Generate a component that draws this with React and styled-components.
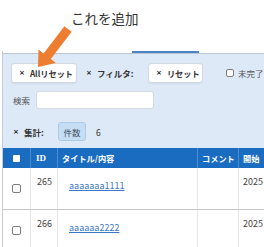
import React from "react";
import styled, { createGlobalStyle } from "styled-components";

const Global = createGlobalStyle`
  html, body { margin: 0; padding: 0; background: #fff; }
  body { font-family: "Noto Sans CJK JP", "Noto Sans", sans-serif; color: #333; }
  * { box-sizing: border-box; }
`;

const Page = styled.div`
  position: relative;
  width: 264px;
  height: 247px;
  overflow: hidden;
`;

const Heading = styled.div`
  height: 51px;
  padding: 9px 0 0 71px;
  font-size: 13.5px;
  line-height: 18px;
  color: #333;
`;

const Frame = styled.div`
  margin-left: 2px;
  border-left: 1px solid #c8ccd0;
`;

const TabBar = styled.div`
  display: flex;
  height: 2px;
  padding-left: 129px;
`;

const Tab = styled.div`
  width: 67px;
  height: 2px;
  background: #4a84c2;
`;

const Panel = styled.div`
  display: flex;
  flex-direction: column;
  background: #dde9f6;
  border-top: 1px solid #b7c6d6;
  padding: 9px 0 7px 8px;
`;

const Row = styled.div`
  display: flex;
  align-items: center;
  height: ${(p) => p.$h}px;
  margin-top: ${(p) => p.$mt || 0}px;
  white-space: nowrap;
`;

const Times = styled.span`
  font-family: "DejaVu Sans", sans-serif;
  font-size: 7px;
  font-weight: 700;
  color: #222;
`;

const Button = styled.div`
  display: flex;
  align-items: center;
  gap: 5px;
  flex: none;
  width: ${(p) => p.$w}px;
  height: 20px;
  margin-left: ${(p) => p.$ml || 0}px;
  padding-left: 7px;
  background: #fff;
  border: 1px solid #d3d9e0;
  border-radius: 3px;
  box-shadow: 0 1px 1px rgba(0, 0, 0, 0.06);
  font-size: 8.2px;
  font-weight: 700;
  color: #333;
`;

const BoldLabel = styled.div`
  display: flex;
  align-items: center;
  gap: 5px;
  flex: none;
  width: ${(p) => p.$w}px;
  margin-left: ${(p) => p.$ml || 0}px;
  font-size: 8.5px;
  font-weight: 700;
  color: #333;
`;

const CheckLabel = styled.label`
  display: flex;
  align-items: center;
  gap: 4px;
  margin-left: ${(p) => p.$ml || 0}px;
  font-size: 8.5px;
  color: #555;
`;

const Box = styled.span`
  display: inline-block;
  flex: none;
  width: ${(p) => p.$s}px;
  height: ${(p) => p.$s}px;
  background: #fff;
  border: ${(p) => (p.$solid ? "none" : "1px solid #7d7d7d")};
  border-radius: ${(p) => (p.$solid ? 1 : 2)}px;
`;

const PlainLabel = styled.span`
  flex: none;
  width: ${(p) => p.$w}px;
  margin-left: ${(p) => p.$ml || 0}px;
  font-size: 8.5px;
  color: #555;
`;

const SearchInput = styled.div`
  flex: none;
  width: 118px;
  height: 18px;
  margin-left: 6px;
  background: #fff;
  border: 1px solid #d5dbe2;
  border-radius: 3px;
`;

const Chip = styled.div`
  display: flex;
  align-items: center;
  justify-content: center;
  flex: none;
  width: 28px;
  height: 19px;
  margin-left: 13px;
  background: #c6ddf4;
  border: 1px solid #aecbe8;
  border-radius: 3px;
  font-size: 8.5px;
  color: #445566;
`;

const Count = styled.span`
  margin-left: 10px;
  font-size: 8.5px;
  color: #333;
`;

const Table = styled.div`
  display: grid;
  grid-template-columns: 27px 27px 140px 41px 1fr;
`;

const HeadCell = styled.div`
  display: flex;
  align-items: center;
  justify-content: ${(p) => (p.$center ? "center" : "flex-start")};
  height: 20px;
  padding-left: ${(p) => p.$pl || 0}px;
  background: #1a6cc0;
  color: #fff;
  font-size: ${(p) => (p.$serif ? 9 : 8.2)}px;
  font-weight: 700;
  font-family: ${(p) =>
    p.$serif ? '"Liberation Serif", serif' : '"Noto Sans CJK JP", sans-serif'};
  border-left: ${(p) => (p.$first ? "none" : "1px solid rgba(255,255,255,0.22)")};
  white-space: nowrap;
  overflow: hidden;
`;

const BodyCell = styled.div`
  display: flex;
  align-items: ${(p) => (p.$center ? "center" : "flex-start")};
  justify-content: ${(p) => (p.$center ? "center" : "flex-start")};
  height: 42px;
  padding-top: ${(p) => (p.$center ? 0 : p.$pt ?? 7)}px;
  padding-left: ${(p) => p.$pl || 0}px;
  border-left: ${(p) => (p.$first ? "none" : "1px solid #e6e6e6")};
  border-bottom: 1px solid #c6c6c6;
  font-size: 9px;
  line-height: 13px;
  color: #444;
  white-space: nowrap;
  overflow: hidden;
`;

const Link = styled.a`
  color: #3c78c8;
  text-decoration: underline;
  font-size: 9px;
`;

const ArrowSvg = styled.svg`
  position: absolute;
  left: 0;
  top: 0;
  pointer-events: none;
`;

const rows = [
  { id: 265, title: "aaaaaaa1111", start: "2025" },
  { id: 266, title: "aaaaaa2222", start: "2025" },
];

export default function App() {
  return (
    <Page>
      <Global />
      <Heading>これを追加</Heading>
      <Frame>
        <TabBar>
          <Tab />
        </TabBar>
        <Panel>
          <Row $h={20}>
            <Button $w={66}>
              <Times>×</Times>
              <span>Allリセット</span>
            </Button>
            <BoldLabel $w={50} $ml={9}>
              <Times>×</Times>
              <span>フィルタ:</span>
            </BoldLabel>
            <Button $w={55} $ml={12}>
              <Times>×</Times>
              <span>リセット</span>
            </Button>
            <CheckLabel $ml={23}>
              <Box $s={8} />
              <span>未完了</span>
            </CheckLabel>
          </Row>
          <Row $h={18} $mt={8}>
            <PlainLabel $w={17} $ml={2}>
              検索
            </PlainLabel>
            <SearchInput />
          </Row>
          <Row $h={19} $mt={13}>
            <BoldLabel $w={32} $ml={2}>
              <Times>×</Times>
              <span>集計:</span>
            </BoldLabel>
            <Chip>件数</Chip>
            <Count>6</Count>
          </Row>
        </Panel>
        <Table>
          <HeadCell $first $center>
            <Box $s={7} $solid />
          </HeadCell>
          <HeadCell $pl={5} $serif>
            ID
          </HeadCell>
          <HeadCell $pl={4}>タイトル/内容</HeadCell>
          <HeadCell $pl={4}>コメント</HeadCell>
          <HeadCell $pl={4}>開始</HeadCell>
          {rows.map((r) => (
            <React.Fragment key={r.id}>
              <BodyCell $first $center>
                <Box $s={9} />
              </BodyCell>
              <BodyCell $pl={6}>{r.id}</BodyCell>
              <BodyCell $pl={11} $pt={11}>
                <Link href="#">{r.title}</Link>
              </BodyCell>
              <BodyCell />
              <BodyCell $pl={4}>{r.start}</BodyCell>
            </React.Fragment>
          ))}
        </Table>
      </Frame>
      <ArrowSvg width="264" height="247" viewBox="0 0 264 247">
        <polygon
          points="64.4,26.3 71.6,31.7 50.8,59 55.9,62.9 38,67 38.5,49.5 43.6,53.5"
          fill="#ED7D31"
        />
      </ArrowSvg>
    </Page>
  );
}
